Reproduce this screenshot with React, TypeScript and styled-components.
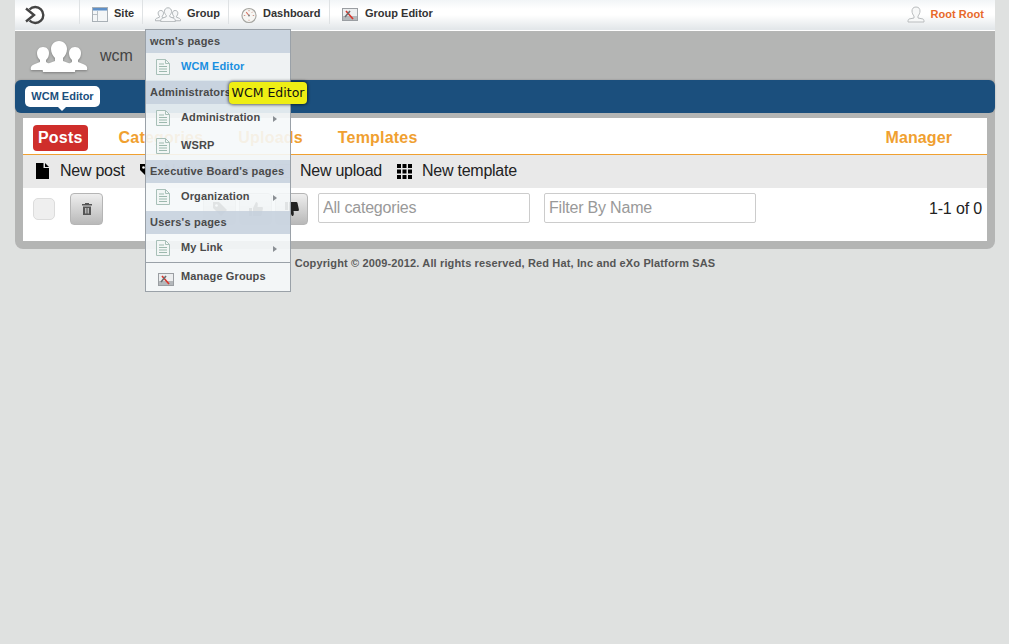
import * as React from 'react';
import styled, { createGlobalStyle } from 'styled-components';

const GlobalStyle = createGlobalStyle`
  html, body {
    margin: 0;
    padding: 0;
    height: 100%;
    background: #dfe1e0;
    font-family: "Liberation Sans", Arial, sans-serif;
    overflow: hidden;
  }
`;

const Page = styled('div')`
  position: relative;
  width: 980px;
  margin-left: 15px;
`;

const TopBar = styled('header')`
  display: flex;
  align-items: flex-start;
  height: 30px;
  border-bottom: 1px solid #fff;
  background: linear-gradient(#f2f5f7 0, #fff 9px, #fff 15px, #e3e7ea 29px);
`;

const BrandCell = styled('div')`
  width: 65px;
  height: 24px;
  padding: 5px 0 0 10px;
  box-sizing: border-box;
  border-right: 1px solid #dfe2e4;
`;

const NavItem = styled('div')<{ $width: number; $pad: number; $last?: boolean }>`
  display: flex;
  align-items: flex-start;
  gap: 6px;
  box-sizing: border-box;
  width: ${({ $width }) => $width}px;
  height: 24px;
  padding-left: ${({ $pad }) => $pad}px;
  border-right: ${({ $last }) => ($last ? 'none' : '1px solid #dfe2e4')};
  font-size: 11px;
  font-weight: bold;
  line-height: 27px;
  color: #333;
  svg {
    margin-top: 7px;
    flex: none;
  }
`;

const UserCell = styled('div')`
  display: flex;
  gap: 5px;
  margin-left: auto;
  padding: 6px 11px 0 0;
  font-size: 11px;
  font-weight: bold;
  line-height: 17px;
  letter-spacing: 0.05px;
  color: #e7692a;
`;

const GroupBand = styled('section')`
  display: flex;
  align-items: center;
  gap: 12px;
  height: 49px;
  padding-left: 15px;
  background: #b4b5b4;
  font-size: 16px;
  color: #444;
  svg {
    filter: drop-shadow(0 1px 1px rgba(0, 0, 0, 0.3));
  }
`;

const BlueBarWrap = styled('div')`
  background: #b4b5b4;
`;

const BlueBar = styled('nav')`
  height: 33px;
  box-sizing: border-box;
  padding: 6px 10px;
  background: #1b4f7d;
  border-radius: 6px;
  box-shadow: 0 0 2px rgba(0, 0, 0, 0.25);
`;

const ActiveTab = styled('div')`
  position: relative;
  width: 75px;
  height: 21px;
  border-radius: 5px;
  background: #fff;
  color: #1b4f7d;
  font-size: 11px;
  font-weight: bold;
  line-height: 21px;
  text-align: center;
  &::after {
    content: '';
    position: absolute;
    left: 33px;
    bottom: -4px;
    border: 4px solid transparent;
    border-top-color: #fff;
    border-bottom: 0;
  }
`;

const Panel = styled('section')`
  padding: 5px 8px 8px;
  background: #b4b5b4;
  border-radius: 0 0 8px 8px;
`;

const Content = styled('div')`
  height: 123px;
  background: #fff;
`;

const Tabs = styled('div')`
  display: flex;
  align-items: center;
  height: 32px;
  padding: 4px 35px 0 10px;
  border-bottom: 1px solid #f0a030;
`;

const Tab = styled('div')<{ $active?: boolean; $gap: number }>`
  margin-left: ${({ $gap }) => $gap}px;
  padding: 0 5px;
  height: 26px;
  line-height: 26px;
  border-radius: 4px;
  font-size: 16px;
  font-weight: bold;
  color: ${({ $active }) => ($active ? '#fff' : '#f0a030')};
  background: ${({ $active }) => ($active ? '#cf2e2b' : 'transparent')};
  letter-spacing: 0.2px;
`;

const TabPush = styled('div')`
  margin-left: auto;
  font-size: 16px;
  font-weight: bold;
  letter-spacing: 0.1px;
  color: #f0a030;
`;

const Toolbar = styled('div')`
  display: flex;
  align-items: center;
  height: 32px;
  padding: 0 0 1px 13px;
  background: #e9e9e9;
`;

const ToolAction = styled('div')<{ $width: number }>`
  display: flex;
  align-items: center;
  width: ${({ $width }) => $width}px;
  flex: none;
  font-size: 16px;
  letter-spacing: -0.25px;
  color: #222;
`;

const ToolIcon = styled('span')<{ $width: number }>`
  display: flex;
  width: ${({ $width }) => $width}px;
  flex: none;
`;

const FilterRow = styled('div')`
  display: flex;
  align-items: flex-start;
  padding: 5px 5px 0 10px;
`;

const Checkbox = styled('div')`
  width: 20px;
  height: 20px;
  margin: 5px 15px 0 0;
  border: 1px solid #dcdcdc;
  border-radius: 5px;
  background: #efefef;
`;

const ActionButton = styled('button')<{ $gap?: number }>`
  display: flex;
  align-items: center;
  justify-content: center;
  width: 33px;
  height: 32px;
  margin-left: ${({ $gap }) => $gap ?? 0}px;
  padding: 0;
  border: 1px solid #b5b5b5;
  border-radius: 4px;
  background: linear-gradient(#eeeeee, #b9b9b9);
`;

const FilterInput = styled('input')<{ $gap: number }>`
  width: 212px;
  height: 30px;
  margin-left: ${({ $gap }) => $gap}px;
  padding: 0 4px;
  box-sizing: border-box;
  border: 1px solid #ccc;
  border-radius: 2px;
  font: 16px "Liberation Sans", Arial, sans-serif;
  letter-spacing: -0.2px;
  outline: none;
  &::placeholder {
    color: #999;
    opacity: 1;
  }
`;

const Paging = styled('div')`
  margin: 7px 0 0 auto;
  font-size: 16px;
  letter-spacing: -0.15px;
  color: #222;
`;

const Footer = styled('footer')`
  padding-top: 7px;
  text-align: center;
  font-size: 11px;
  font-weight: bold;
  line-height: 14px;
  letter-spacing: 0.14px;
  color: #555;
`;

const GroupMenu = styled('aside')`
  position: absolute;
  left: 130px;
  top: 29px;
  width: 146px;
  box-sizing: border-box;
  border: 1px solid #9aa1a8;
  background: rgba(245, 248, 250, 0.9);
`;

const MenuHeading = styled('div')`
  height: 23px;
  padding-left: 4px;
  background: rgba(194, 205, 219, 0.8);
  font-size: 11px;
  font-weight: bold;
  line-height: 23px;
  letter-spacing: 0.2px;
  color: #4a4a4a;
  white-space: nowrap;
`;

const MenuRow = styled('div')<{ $current?: boolean }>`
  position: relative;
  display: flex;
  gap: 11px;
  height: 28px;
  box-sizing: border-box;
  padding: 6px 0 0 10px;
  font-size: 11px;
  font-weight: bold;
  line-height: 15px;
  letter-spacing: 0.12px;
  color: ${({ $current }) => ($current ? '#1a8fe0' : '#4a4a4a')};
`;

const ManageRow = styled(MenuRow)`
  height: 29px;
  gap: 6px;
  padding-left: 12px;
  border-top: 1px solid #9aa1a8;
  svg {
    margin-top: 3px;
  }
`;

const Caret = styled('span')`
  position: absolute;
  right: 13px;
  top: 12px;
  border: 3px solid transparent;
  border-left: 4px solid #8a8f94;
  border-right: 0;
`;

const Tooltip = styled('div')`
  position: absolute;
  left: 214px;
  top: 82px;
  width: 78px;
  height: 22px;
  box-sizing: border-box;
  border-radius: 4px;
  background: #eeee14;
  box-shadow: 0 0 3px 1px rgba(0, 0, 0, 0.55);
  font-family: "DejaVu Sans", sans-serif;
  font-size: 12.5px;
  line-height: 21px;
  text-align: center;
  color: #111;
`;

const BrandIcon = () => (
  <svg width="22" height="20" viewBox="0 0 22 20" fill="none" stroke="#444" strokeWidth="2.4">
    <path d="M4.5 4.5 A8 8 0 1 1 4.5 15.5" />
    <path d="M1 3.5 L9 10 L1 16.5" />
  </svg>
);

const SiteIcon = () => (
  <svg width="16" height="15" viewBox="0 0 16 15">
    <rect x="0.5" y="0.5" width="15" height="14" fill="#f4f6f7" stroke="#a9b0b6" />
    <rect x="1" y="1" width="14" height="2.5" fill="#5f90c8" />
    <path d="M5.5 4v10M1 7.5h4" stroke="#b9bfc4" />
  </svg>
);

const PeopleIcon = ({ width, height, solid }: { width: number; height: number; solid?: boolean }) => (
  <svg width={width} height={height} viewBox="0 0 58 32" fill={solid ? '#fff' : '#f6f7f8'} stroke={solid ? 'none' : '#a8adb1'} strokeWidth={solid ? 0 : 2}>
    <path d="M13 7c4 0 6 3 6 6 0 3-1 5-3 7v2l5 3-2 5H1c-1-3 1-5 4-6l5-2v-2c-2-2-3-4-3-7 0-3 2-6 6-6z" />
    <path d="M45 7c-4 0-6 3-6 6 0 3 1 5 3 7v2l-5 3 2 5h18c1-3-1-5-4-6l-5-2v-2c2-2 3-4 3-7 0-3-2-6-6-6z" />
    <path d="M29 1c5 0 8 4 8 8 0 4-2 7-4 9v3l8 3c3 1 5 4 4 8H13c-1-4 1-7 4-8l8-3v-3c-2-2-4-5-4-9 0-4 3-8 8-8z" />
  </svg>
);

const GaugeIcon = () => (
  <svg width="16" height="17" viewBox="0 0 17 17">
    <circle cx="8.5" cy="8.5" r="7.5" fill="#f7f6f3" stroke="#a5a5a0" strokeWidth="1.2" />
    <path d="M8.5 8.5 L5.5 5" stroke="#d8705f" strokeWidth="1.1" />
    <path d="M8.5 2.5v1.5M14 8.5h-1.5M3 8.5h1.5M12.5 4.500l-1 1M8.500 13v1" stroke="#c98f80" />
    <circle cx="8.5" cy="8.5" r="1.1" fill="#888" />
  </svg>
);

const ToolsIcon = () => (
  <svg width="17" height="14" viewBox="0 0 17 14">
    <rect x="0.5" y="1.5" width="15" height="12" fill="#eceeef" stroke="#9a9ea2" />
    <rect x="1" y="9" width="14" height="4" fill="#b4b8bb" />
    <path d="M4 4 L11 12" stroke="#d8362c" strokeWidth="1.6" />
    <path d="M3 10 L8 4" stroke="#6a6e71" strokeWidth="1.6" />
  </svg>
);

const UserIcon = () => (
  <svg width="18" height="17" viewBox="0 0 18 17" fill="#f7f8f8" stroke="#b9bcbe">
    <path d="M9 1c3 0 4 2 4 4 0 2-1 4-2 5v2l5 1c1 .5 1 2 1 3H1c0-1 0-2.500 1-3l5-1v-2C6 9 5 7 5 5c0-2 1-4 4-4z" />
  </svg>
);

const DocIcon = () => (
  <svg width="14" height="16" viewBox="0 0 14 16" fill="none">
    <path d="M.5.5h9l4 4v11H.5z" fill="#f2f6f5" stroke="#a8c0b8" />
    <path d="M9.500.5v4h4" stroke="#a8c0b8" />
    <path d="M3 5h5M3 7.500h8M3 10h8M3 12.500h8" stroke="#9cb9ae" />
  </svg>
);

const NewPostIcon = () => (
  <svg width="13" height="16" viewBox="0 0 13 16">
    <path d="M0 0h7.500v5H13v11H0z M9 0l4 4H9z" fill="#000" />
  </svg>
);

const TagIcon = ({ color }: { color: string }) => (
  <svg width="14" height="14" viewBox="0 0 14 14">
    <path d="M0 0h6l8 8-6 6-8-8z" fill={color} />
    <circle cx="3.500" cy="3.500" r="1.300" fill="#fff" />
  </svg>
);

const GridIcon = () => (
  <svg width="15" height="15" viewBox="0 0 15 15" fill="#000">
    {[0, 5.5, 11].flatMap((y) =>
      [0, 5.5, 11].map((x) => <rect key={`${x}-${y}`} x={x} y={y} width="4" height="4" />)
    )}
  </svg>
);

const UploadIcon = () => (
  <svg width="16" height="14" viewBox="0 0 16 14">
    <rect x="0.5" y="0.5" width="15" height="13" rx="1" fill="#d8dadc" stroke="#888" />
    <path d="M8 3l4 5H4z" fill="#666" />
  </svg>
);

const TrashIcon = () => (
  <svg width="10" height="12" viewBox="0 0 10 12" fill="#555">
    <path d="M3 0h4v1h3v1.500H0V1h3z" />
    <path d="M1 3.500h8V12H1zM3 5v5.500h.8V5zM4.600 5v5.500h.8V5zM6.200 5v5.500H7V5z" fillRule="evenodd" />
  </svg>
);

const ThumbIcon = ({ down }: { down?: boolean }) => (
  <svg width="14" height="14" viewBox="0 0 14 14" fill="#222" transform={down ? 'scale(1,-1)' : undefined}>
    <path d="M0 6h3v8H0zM4 6l3-6c2 0 2 2 1.500 5H13c1 0 1 1 .8 2l-1.300 6c-.2.600-.6 1-1.200 1H4z" />
  </svg>
);

const navItems = [
  { label: 'Site', icon: <SiteIcon />, width: 63, pad: 12 },
  { label: 'Group', icon: <PeopleIcon width={26} height={15} />, width: 86, pad: 12 },
  { label: 'Dashboard', icon: <GaugeIcon />, width: 101, pad: 12 },
];

const App = () => {
  return (
    <Page>
      <GlobalStyle />
      <TopBar>
        <BrandCell><BrandIcon /></BrandCell>
        {navItems.map((item) => (
          <NavItem key={item.label} $width={item.width} $pad={item.pad}>
            {item.icon}
            <span>{item.label}</span>
          </NavItem>
        ))}
        <NavItem $width={120} $pad={12} $last>
          <ToolsIcon />
          <span>Group Editor</span>
        </NavItem>
        <UserCell><UserIcon />Root Root</UserCell>
      </TopBar>

      <GroupBand>
        <PeopleIcon width={58} height={32} solid />
        wcm
      </GroupBand>

      <BlueBarWrap>
        <BlueBar><ActiveTab>WCM Editor</ActiveTab></BlueBar>
      </BlueBarWrap>

      <Panel>
        <Content>
          <Tabs>
            <Tab $active $gap={0}>Posts</Tab>
            <Tab $gap={26}>Categories</Tab>
            <Tab $gap={25}>Uploads</Tab>
            <Tab $gap={25}>Templates</Tab>
            <TabPush>Manager</TabPush>
          </Tabs>
          <Toolbar>
            <ToolAction $width={104}>
              <ToolIcon $width={24}><NewPostIcon /></ToolIcon>New post
            </ToolAction>
            <ToolAction $width={135}>
              <ToolIcon $width={24}><TagIcon color="#000" /></ToolIcon>New category
            </ToolAction>
            <ToolAction $width={122}>
              <ToolIcon $width={25}><UploadIcon /></ToolIcon>New upload
            </ToolAction>
            <ToolAction $width={140}>
              <ToolIcon $width={25}><GridIcon /></ToolIcon>New template
            </ToolAction>
          </Toolbar>
          <FilterRow>
            <Checkbox />
            <ActionButton><TrashIcon /></ActionButton>
            <ActionButton $gap={100}><TagIcon color="#222" /></ActionButton>
            <ActionButton $gap={3}><ThumbIcon /></ActionButton>
            <ActionButton $gap={3}><ThumbIcon down /></ActionButton>
            <FilterInput $gap={10} placeholder="All categories" />
            <FilterInput $gap={14} placeholder="Filter By Name" />
            <Paging>1-1 of 0</Paging>
          </FilterRow>
        </Content>
      </Panel>

      <Footer>Copyright © 2009-2012. All rights reserved, Red Hat, Inc and eXo Platform SAS</Footer>

      <GroupMenu>
        <MenuHeading>wcm's pages</MenuHeading>
        <MenuRow $current><DocIcon />WCM Editor</MenuRow>
        <MenuHeading>Administrators's pages</MenuHeading>
        <MenuRow><DocIcon />Administration<Caret /></MenuRow>
        <MenuRow><DocIcon />WSRP</MenuRow>
        <MenuHeading>Executive Board's pages</MenuHeading>
        <MenuRow><DocIcon />Organization<Caret /></MenuRow>
        <MenuHeading>Users's pages</MenuHeading>
        <MenuRow><DocIcon />My Link<Caret /></MenuRow>
        <ManageRow><ToolsIcon />Manage Groups</ManageRow>
      </GroupMenu>

      <Tooltip>WCM Editor</Tooltip>
    </Page>
  );
};

export default App;
